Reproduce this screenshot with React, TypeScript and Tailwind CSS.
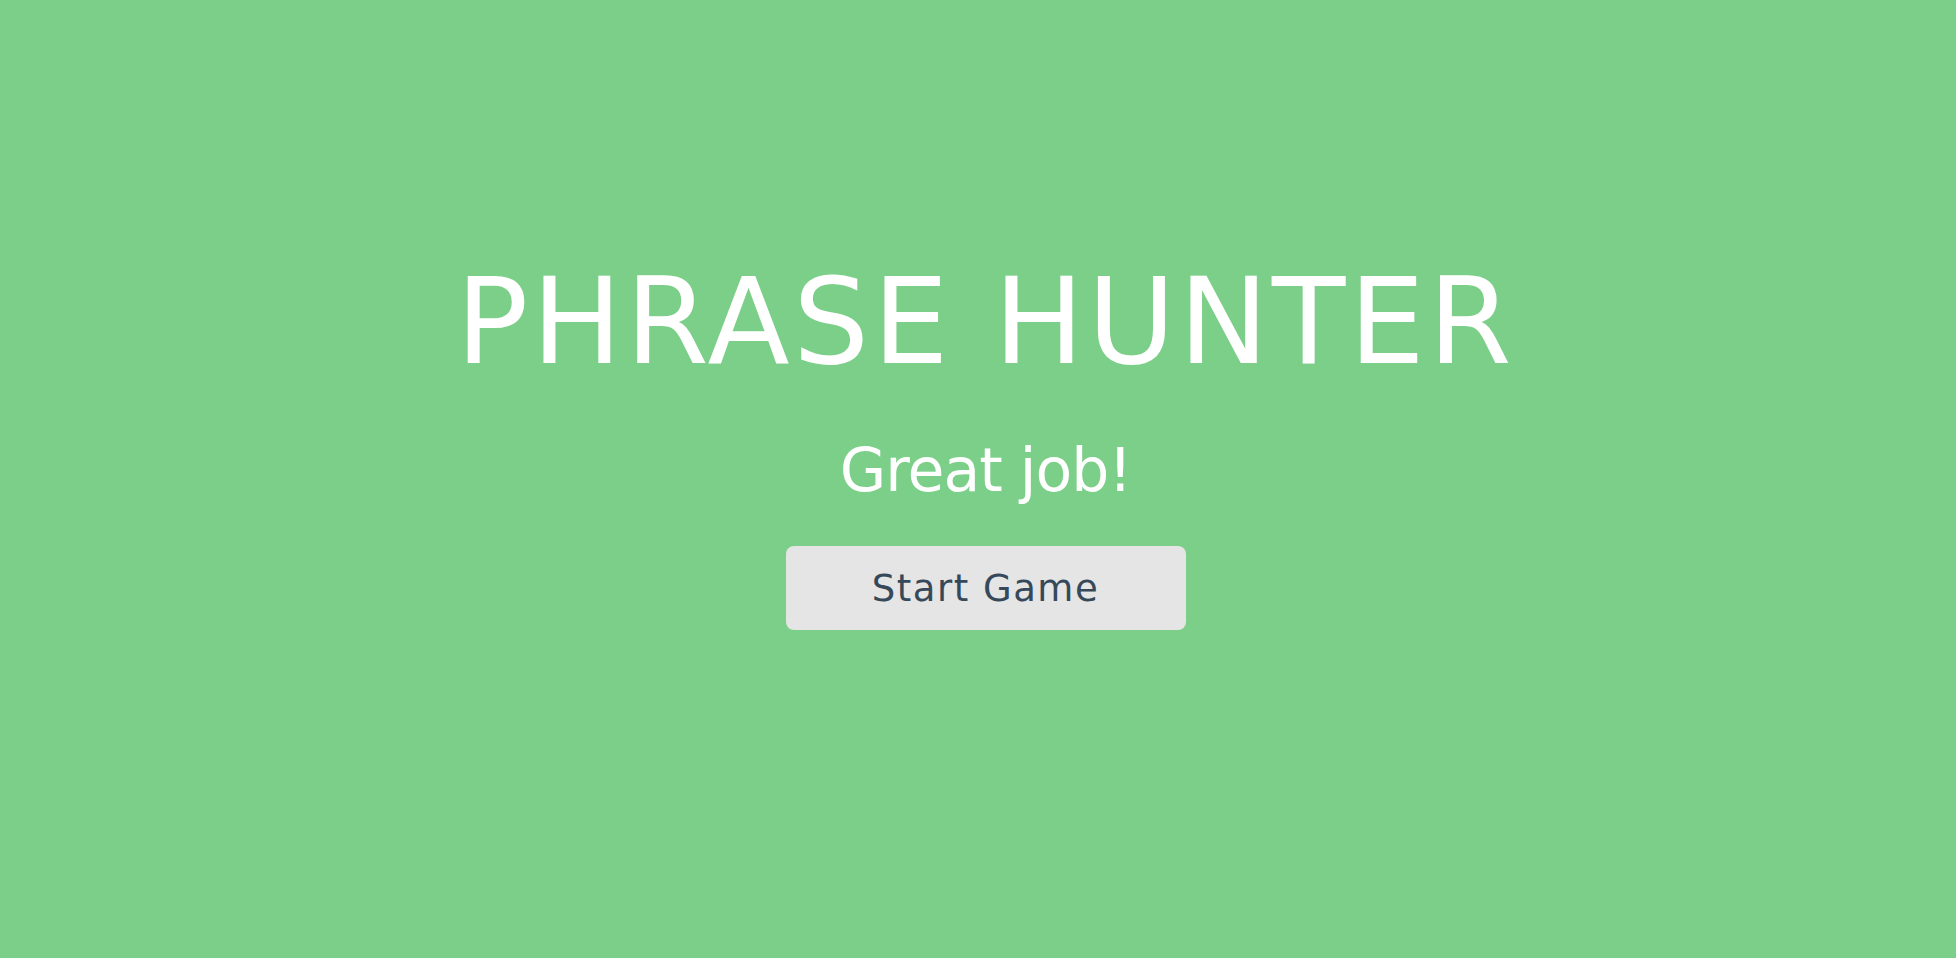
const FONT = "'DejaVu Sans', 'Open Sans', sans-serif";

export default function App() {
  return (
    <div
      className="flex min-h-screen w-full flex-col items-center bg-[#7bcf88] pl-[15px] pt-[262px]"
      style={{ fontFamily: FONT }}
    >
      {/* Title */}
      <h1 className="text-[120px] font-normal leading-none tracking-[3.5px] text-white">
        PHRASE HUNTER
      </h1>

      {/* Result message */}
      <h2 className="mt-[58px] text-[60px] font-normal leading-none tracking-[-1px] text-white">
        Great job!
      </h2>

      {/* Start button */}
      <button className="mt-[46px] flex h-[84px] w-[400px] items-center justify-center rounded-lg bg-[#e5e5e5] text-[37px] leading-none tracking-[1.5px] text-[#36495a]">
        Start Game
      </button>
    </div>
  );
}
